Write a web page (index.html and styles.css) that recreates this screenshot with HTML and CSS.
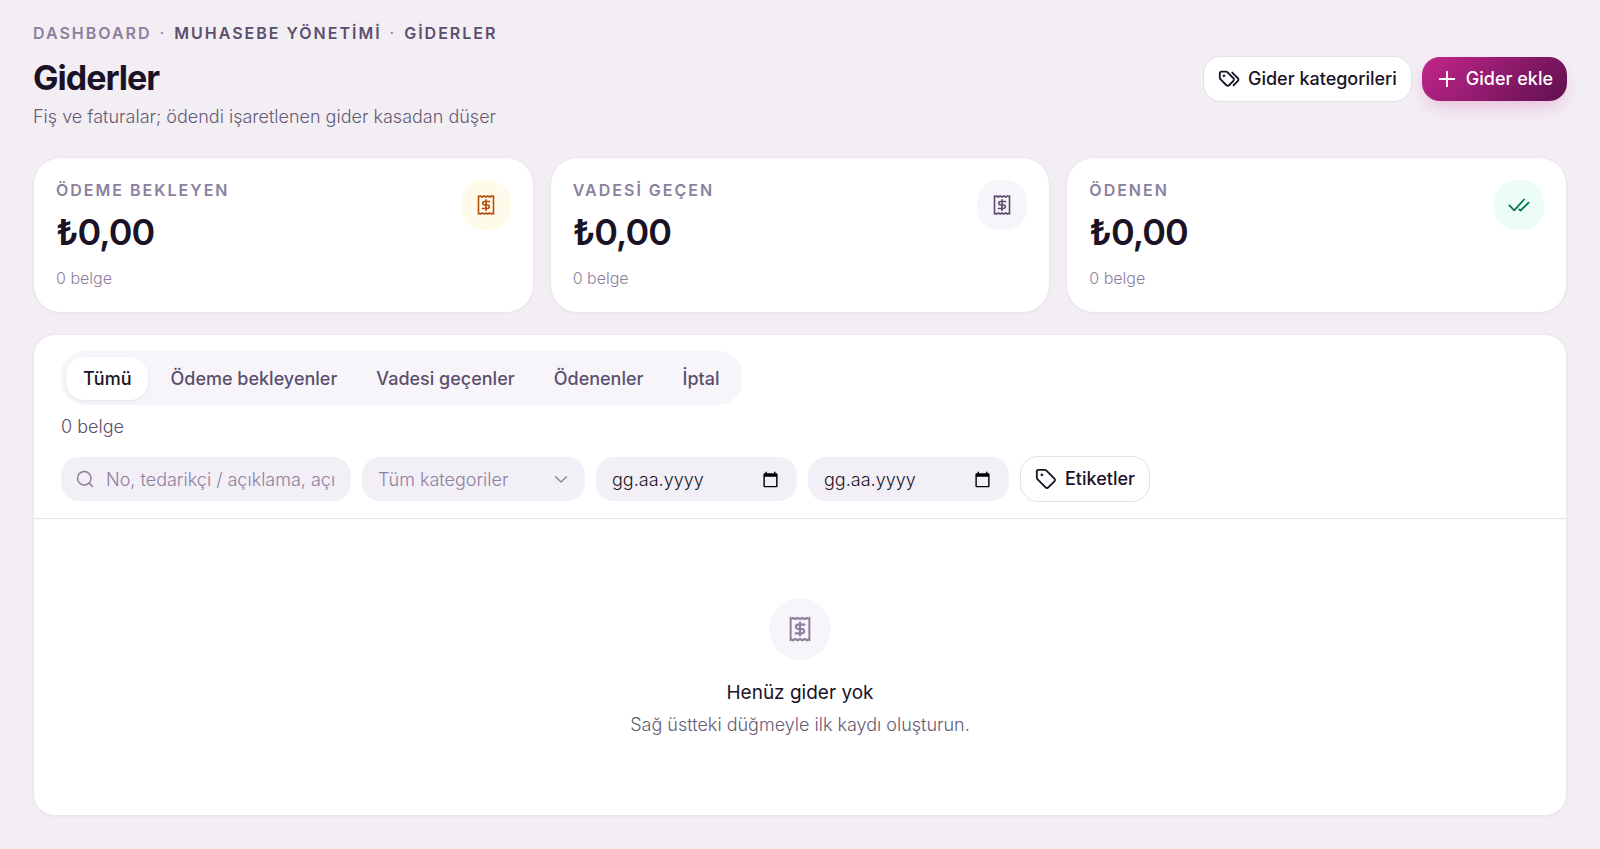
FILE: index.html
```html
<!DOCTYPE html>
<html lang="tr">
<head>
<meta charset="utf-8">
<meta name="viewport" content="width=device-width, initial-scale=1">
<title>Giderler</title>
<link rel="stylesheet" href="styles.css">
</head>
<body>
<svg class="sprite" aria-hidden="true">
  <symbol id="receipt" viewBox="0 0 24 24">
    <path fill="currentColor" fill-rule="evenodd" d="M3.700 2L5.300 2.700 6.400 2.100 8.200 3 10.200 2.100 12 3 13.800 2.100 15.800 3 17.600 2.100 18.700 2.700 20.300 2V22L18.700 21.300 17.600 21.900 15.800 21 13.800 21.900 12 21 10.200 21.900 8.200 21 6.400 21.900 5.300 21.300 3.700 22zM5.300 4.600V19.400L6.400 19.900 8.200 19 10.200 19.900 12 19 13.800 19.900 15.800 19 17.600 19.900 18.700 19.400V4.600L17.600 4.100 15.800 5 13.800 4.100 12 5 10.200 4.100 8.200 5 6.400 4.100z"/>
    <path fill="none" stroke="currentColor" stroke-width="1.700" stroke-linecap="round" d="M15.500 8.500h-5a1.750 1.750 0 0 0 0 3.500h3a1.750 1.750 0 0 1 0 3.500h-5M12 6.800v10.400"/>
  </symbol>
</svg>
<main class="page">
  <header class="page-header">
    <div class="heading">
      <nav class="crumbs" aria-label="Sayfa yolu">
        <a class="crumb crumb-root" href="#">DASHBOARD</a>
        <span class="dot">·</span>
        <a class="crumb" href="#">MUHASEBE YÖNETİMİ</a>
        <span class="dot">·</span>
        <a class="crumb" href="#" aria-current="page">GİDERLER</a>
      </nav>
      <h1 class="title">Giderler</h1>
      <p class="subtitle">Fiş ve faturalar; ödendi işaretlenen gider kasadan düşer</p>
    </div>
    <div class="actions">
      <button class="btn btn-outline" type="button">
        <svg class="icon" viewBox="0 0 24 24"><path d="M2 5.500v5.200c0 .6.2 1.100.6 1.500l6.600 6.600a2 2 0 0 0 2.900 0l4.700-4.700a2 2 0 0 0 0-2.900L10.200 4.600c-.4-.4-.9-.6-1.500-.6H3.500A1.500 1.500 0 0 0 2 5.500zM15.500 5l6.200 6.200a2 2 0 0 1 0 2.900L17 18.800"/><circle class="fill" cx="6.500" cy="8.500" r="0.500"/></svg>
        Gider kategorileri
      </button>
      <button class="btn btn-primary" type="button">
        <svg class="icon" viewBox="0 0 24 24"><path d="M12 4v16M4 12h16"/></svg>
        Gider ekle
      </button>
    </div>
  </header>

  <section class="stats" aria-label="Özet">
    <article class="stat">
      <div>
        <h2 class="stat-label">ÖDEME BEKLEYEN</h2>
        <p class="stat-value">₺0,00</p>
        <p class="stat-note">0 belge</p>
      </div>
      <span class="badge badge-amber"><svg class="badge-icon"><use href="#receipt"/></svg></span>
    </article>
    <article class="stat">
      <div>
        <h2 class="stat-label">VADESİ GEÇEN</h2>
        <p class="stat-value">₺0,00</p>
        <p class="stat-note">0 belge</p>
      </div>
      <span class="badge badge-muted"><svg class="badge-icon"><use href="#receipt"/></svg></span>
    </article>
    <article class="stat">
      <div>
        <h2 class="stat-label">ÖDENEN</h2>
        <p class="stat-value">₺0,00</p>
        <p class="stat-note">0 belge</p>
      </div>
      <span class="badge badge-green"><svg class="icon" viewBox="0 0 24 24"><path d="M1.500 12.500l5.300 5.300L17.500 6M12.200 16.800l1.400 1.200L22.500 9.500"/></svg></span>
    </article>
  </section>

  <section class="panel">
    <div class="toolbar">
      <div class="tabs" role="tablist">
        <button class="tab tab-active" type="button" role="tab" aria-selected="true">Tümü</button>
        <button class="tab" type="button" role="tab" aria-selected="false">Ödeme bekleyenler</button>
        <button class="tab" type="button" role="tab" aria-selected="false">Vadesi geçenler</button>
        <button class="tab" type="button" role="tab" aria-selected="false">Ödenenler</button>
        <button class="tab" type="button" role="tab" aria-selected="false">İptal</button>
      </div>
      <p class="count">0 belge</p>
      <form class="filters">
        <label class="field field-search">
          <svg class="field-icon" viewBox="0 0 24 24"><circle cx="11" cy="11" r="9"/><path d="M17.500 17.500L22 22"/></svg>
          <input class="field-input" type="search" aria-label="Ara" placeholder="No, tedarikçi / açıklama, açıklama">
        </label>
        <label class="field field-select">
          <select class="field-input" aria-label="Kategori"><option>Tüm kategoriler</option></select>
          <svg class="field-chevron" viewBox="0 0 24 24"><path d="M4 8.500l8 8 8-8"/></svg>
        </label>
        <label class="field field-date">
          <input class="field-input" type="text" aria-label="Başlangıç tarihi" placeholder="gg.aa.yyyy">
          <svg class="calendar" viewBox="0 0 24 24"><path d="M20 3h-1V1h-2v2H7V1H5v2H4c-1.100 0-2 .9-2 2v16c0 1.100.9 2 2 2h16c1.100 0 2-.9 2-2V5c0-1.100-.9-2-2-2zm0 18H4V8h16v13z"/></svg>
        </label>
        <label class="field field-date">
          <input class="field-input" type="text" aria-label="Bitiş tarihi" placeholder="gg.aa.yyyy">
          <svg class="calendar" viewBox="0 0 24 24"><path d="M20 3h-1V1h-2v2H7V1H5v2H4c-1.100 0-2 .9-2 2v16c0 1.100.9 2 2 2h16c1.100 0 2-.9 2-2V5c0-1.100-.9-2-2-2zm0 18H4V8h16v13z"/></svg>
        </label>
        <button class="btn btn-outline" type="button">
          <svg class="icon" viewBox="0 0 24 24"><path d="M2 3.500v7.200c0 .6.2 1.100.6 1.500l9 9a2 2 0 0 0 2.900 0l6.700-6.700a2 2 0 0 0 0-2.900l-9-9c-.4-.4-.9-.6-1.500-.6H3.500A1.500 1.500 0 0 0 2 3.500z"/><circle class="fill" cx="7.500" cy="7.500" r="0.500"/></svg>
          Etiketler
        </button>
      </form>
    </div>
    <div class="empty">
      <span class="empty-badge"><svg class="empty-icon"><use href="#receipt"/></svg></span>
      <h2 class="empty-title">Henüz gider yok</h2>
      <p class="empty-text">Sağ üstteki düğmeyle ilk kaydı oluşturun.</p>
    </div>
  </section>
</main>
</body>
</html>
```
FILE: styles.css
```css
* {
  box-sizing: border-box;
}

body {
  margin: 0;
  min-height: 100vh;
  background: linear-gradient(90deg, #f0eef4, #f3eef4 20px);
  color: #1a1325;
  font-family: Inter, "Noto Sans", sans-serif;
  font-size: 18px;
  line-height: 24px;
}

h1, h2, p {
  margin: 0;
}

button, input, select {
  font: inherit;
  color: inherit;
}

.sprite {
  display: none;
}

.page {
  display: flex;
  flex-direction: column;
  min-height: 100vh;
  padding: 20px 33px 33px;
}

.page-header {
  display: flex;
  justify-content: space-between;
  align-items: center;
  margin-bottom: 27px;
}

.crumbs {
  display: flex;
  gap: 8px;
  font-size: 16px;
  font-weight: 600;
  line-height: 26px;
  letter-spacing: 2px;
}

.crumb {
  color: #5b4f6e;
  text-decoration: none;
}

.crumb-root,
.dot {
  color: #8b809e;
}

.dot {
  font-weight: 400;
}

.title {
  margin-top: 10px;
  font-size: 34px;
  font-weight: 700;
  line-height: 44px;
  letter-spacing: -1px;
}

.subtitle {
  margin-top: 4px;
  color: #655b75;
  font-weight: 300;
  line-height: 26px;
}

.actions {
  display: flex;
  align-items: center;
  gap: 10px;
  padding-top: 7px;
}

.btn {
  display: flex;
  align-items: center;
  gap: 8px;
  height: 46px;
  padding: 0 14px;
  border: 0;
  border-radius: 18px;
  font-weight: 500;
  white-space: nowrap;
}

.btn-outline {
  border: 1px solid #e2dfe8;
  background: #fff;
}

.btn-primary {
  height: 44px;
  background: linear-gradient(135deg, #c4268c, #5e104f);
  box-shadow: 0 8px 18px -4px #c4268c44;
  color: #fff;
}

.icon {
  width: 22px;
  height: 22px;
  fill: none;
  stroke: currentColor;
  stroke-width: 2;
  stroke-linecap: round;
  stroke-linejoin: round;
}

.fill {
  fill: currentColor;
}

.stats {
  display: grid;
  grid-template-columns: repeat(3, 1fr);
  gap: 16px;
  margin-bottom: 21px;
}

.stat {
  display: flex;
  justify-content: space-between;
  padding: 22px;
  border: 1px solid #ebe7ee;
  border-radius: 28px;
  background: #fff;
  box-shadow: 0 1px 3px #1a13250a;
}

.stat-label {
  color: #8b809e;
  font-size: 16px;
  font-weight: 600;
  line-height: 20px;
  letter-spacing: 2px;
}

.stat-value {
  margin-top: 10px;
  font-size: 36px;
  font-weight: 600;
  line-height: 44px;
  letter-spacing: -1px;
}

.stat-note {
  margin-top: 12px;
  color: #8b809e;
  font-size: 16px;
  font-weight: 300;
  line-height: 24px;
}

.badge {
  display: grid;
  place-items: center;
  width: 50px;
  height: 50px;
  border-radius: 22px;
}

.badge-icon {
  width: 24px;
  height: 24px;
}

.badge-amber {
  background: #fffbeb;
  color: #b4500f;
}

.badge-muted {
  background: #f7f5fa;
  color: #5b4f6e;
}

.badge-green {
  background: #ecfdf5;
  color: #08784f;
}

.panel {
  display: flex;
  flex: 1;
  flex-direction: column;
  border: 1px solid #ebe7ee;
  border-radius: 22px;
  background: #fff;
  box-shadow: 0 1px 3px #1a13250a;
}

.toolbar {
  padding: 16px 27px;
  border-bottom: 1px solid #e6e3ea;
}

.tabs {
  display: flex;
  width: fit-content;
  padding: 6px 5px 5px;
  border-radius: 24px;
  background: #f7f5fa;
}

.tab {
  height: 43px;
  padding: 0 17px;
  margin-right: 5px;
  border: 0;
  border-radius: 18px;
  background: none;
  color: #5b4f6e;
  font-weight: 500;
}

.tab:last-child {
  margin-right: 0;
}

.tab-active {
  background: #fff;
  box-shadow: 0 1px 3px #1a132514;
  color: #1a1325;
}

.count {
  margin: 10px 0 17px;
  color: #5b4f6e;
  font-weight: 300;
}

.filters {
  display: flex;
  flex-wrap: wrap;
  align-items: center;
  gap: 11px;
}

.field {
  display: flex;
  align-items: center;
  gap: 12px;
  height: 44px;
  padding: 0 16px;
  border-radius: 18px;
  background: #f3eff7;
  font-weight: 300;
}

.field-input {
  flex: 1;
  min-width: 0;
  padding: 1px 0 0;
  border: 0;
  outline: 0;
  background: none;
  appearance: none;
}

.field-input::-webkit-search-cancel-button {
  display: none;
}

.field-search {
  width: 290px;
  padding-left: 15px;
}

.field-select {
  width: 223px;
  color: #8b809e;
}

.field-date {
  width: 201px;
  padding-right: 18px;
}

.field-input::placeholder {
  color: #8b809e;
  opacity: 1;
}

.field-date .field-input::placeholder {
  color: #1a1325;
}

.field-icon,
.field-chevron {
  flex: none;
  width: 18px;
  height: 18px;
  fill: none;
  stroke: #8b809e;
  stroke-width: 2;
  stroke-linecap: round;
  stroke-linejoin: round;
}

.field-chevron {
  width: 16px;
  height: 16px;
}

.calendar {
  flex: none;
  width: 17px;
  height: 17px;
  fill: #000;
}

.empty {
  display: flex;
  flex: 1;
  flex-direction: column;
  align-items: center;
  justify-content: center;
  padding: 40px;
}

.empty-badge {
  display: grid;
  place-items: center;
  width: 62px;
  height: 62px;
  border-radius: 50%;
  background: #f7f5fa;
  color: #8b809e;
}

.empty-icon {
  width: 30px;
  height: 30px;
}

.empty-title {
  margin-top: 19px;
  font-size: 19px;
  font-weight: 400;
  line-height: 28px;
}

.empty-text {
  margin-top: 6px;
  color: #655b75;
  font-weight: 300;
}
```
